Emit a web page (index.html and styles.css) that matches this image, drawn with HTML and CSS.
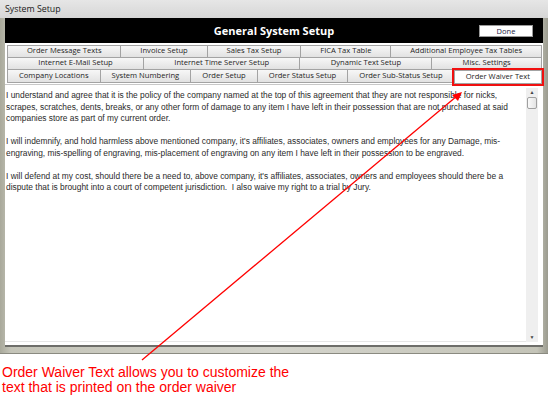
FILE: index.html
```html
<!DOCTYPE html>
<html lang="en">
<head>
    <meta charset="UTF-8">
    <title>System Setup</title>
    <link rel="stylesheet" href="styles.css">
</head>
<body>
    <div class="window">
        <div class="titlebar">System Setup</div>
        <div class="client">
            <div class="header">
                <span></span>
                <h1>General System Setup</h1>
                <button class="done">Done</button>
            </div>

            <div class="tabs">
                <div class="tab-row">
                    <span class="tab">Order Message Texts</span>
                    <span class="tab">Invoice Setup</span>
                    <span class="tab">Sales Tax Setup</span>
                    <span class="tab">FICA Tax Table</span>
                    <span class="tab">Additional Employee Tax Tables</span>
                </div>
                <div class="tab-row">
                    <span class="tab">Internet E-Mail Setup</span>
                    <span class="tab">Internet Time Server Setup</span>
                    <span class="tab">Dynamic Text Setup</span>
                    <span class="tab">Misc. Settings</span>
                </div>
                <div class="tab-row">
                    <span class="tab">Company Locations</span>
                    <span class="tab">System Numbering</span>
                    <span class="tab">Order Setup</span>
                    <span class="tab">Order Status Setup</span>
                    <span class="tab">Order Sub-Status Setup</span>
                    <span class="tab active">Order Waiver Text</span>
                </div>
            </div>

            <div class="panel">
                <div class="textbox">
                    <p>I understand and agree that it is the policy of the company named at the top of this agreement that they are not responsible for nicks, scrapes, scratches, dents, breaks, or any other form of damage to any item I have left in their possession that are not purchased at said companies store as part of my current order.</p>
                    <p>I will indemnify, and hold harmless above mentioned company, it's affiliates, associates, owners and employees for any Damage, mis-engraving, mis-spelling of engraving, mis-placement of engraving on any item I have left in their possession to be engraved.</p>
                    <p>I will defend at my cost, should there be a need to, above company, it's affiliates, associates, owners and employees should there be a dispute that is brought into a court of competent jurisdiction.&nbsp; I also waive my right to a trial by Jury.</p>
                </div>
                <div class="scrollbar">
                    <span class="arrow">&#9650;</span>
                    <span class="thumb"></span>
                    <span class="spacer"></span>
                    <span class="arrow">&#9660;</span>
                </div>
            </div>
        </div>
    </div>

    <p class="caption">Order Waiver Text allows you to customize the<br>text that is printed on the order waiver</p>

    <svg class="pointer" width="550" height="396" viewBox="0 0 550 396">
        <line x1="142" y1="360" x2="457" y2="96" stroke="#ff0000" stroke-width="1.3"/>
        <polygon points="462,92 452,95 458,101" fill="#ff0000"/>
    </svg>
</body>
</html>
```

FILE: styles.css
```css
* {
    margin: 0;
    padding: 0;
    box-sizing: border-box;
}
body {
    width: 550px;
    height: 396px;
    background: #fff;
    font-family: 'Liberation Sans', Arial, sans-serif;
    position: relative;
    overflow: hidden;
}
.window {
    width: 548px;
    background: linear-gradient(to right, #a9a99b, #c4c4b8 2%, #d4d4cc 50%, #c4c4b8 98%, #9b9b8f);
    padding: 0 5px 6px 5px;
    border-bottom: 1px solid #8a8a80;
}
.titlebar {
    height: 18px;
    margin: 0 -5px;
    padding: 3px 5px 0;
    font-family: 'Open Sans', sans-serif;
    font-size: 8.8px;
    color: #1a1a1a;
    background: linear-gradient(#e6e6e6, #d6d6d6);
}
.client {
    background: #fff;
    border-bottom: 2px solid #6e6e6a;
}
.header {
    height: 25px;
    background: #000;
    display: grid;
    grid-template-columns: 1fr auto 1fr;
    align-items: center;
}
.header h1 {
    color: #fff;
    font-family: 'Open Sans', sans-serif;
    font-size: 11px;
    font-weight: bold;
}
.done {
    justify-self: end;
    margin-right: 10px;
    width: 54px;
    height: 12px;
    background: #fff;
    border: 1px solid #9a9a9a;
    font-family: 'Open Sans', sans-serif;
    font-size: 7.5px;
    line-height: 10px;
    color: #222244;
}
.tabs {
    padding: 3px 1px 1px 2px;
    background: #fff;
    border-bottom: 1px solid #c8c8c8;
}
.tab-row {
    display: flex;
}
.tab {
    flex: 1 1 auto;
    height: 13px;
    line-height: 9px;
    text-align: center;
    font-family: 'Open Sans', sans-serif;
    font-size: 7.6px;
    color: #1e1e1e;
    white-space: nowrap;
    background: linear-gradient(#f7f7f7, #e2e2e2);
    border: 1px solid #a3a3a3;
    border-right: none;
    margin-top: -1px;
}
.tab:last-child {
    border-right: 1px solid #a3a3a3;
}
.tab-row:last-child .tab {
    height: 14px;
    line-height: 11px;
}
.tab.active {
    background: #fff;
    height: 16px;
    margin-top: 0;
    margin-bottom: -3px;
    position: relative;
    outline: 2px solid #f01010;
}
.panel {
    display: flex;
    height: 260px;
    padding: 3px 5px 3px 0;
    background: #fff;
}
.textbox {
    flex: 1;
    padding: 2px 1px;
    border-bottom: 1px solid #e6e6e6;
    font-size: 8.4px;
    line-height: 11.5px;
    color: #2a2a2a;
}
.textbox p {
    margin-bottom: 11.5px;
}
.scrollbar {
    width: 12px;
    background: #efefef;
    display: flex;
    flex-direction: column;
    align-items: center;
}
.scrollbar .arrow {
    font-size: 5px;
    line-height: 9px;
    color: #444;
}
.thumb {
    width: 10px;
    height: 12px;
    background: linear-gradient(to right, #fafafa, #e4e4e4);
    border: 1px solid #a0a0a0;
    border-radius: 2px;
}
.spacer {
    flex: 1;
}
.caption {
    margin: 11px 0 0 2px;
    font-size: 14px;
    line-height: 15px;
    color: #ff0000;
}
.pointer {
    position: absolute;
    left: 0;
    top: 0;
}
```
